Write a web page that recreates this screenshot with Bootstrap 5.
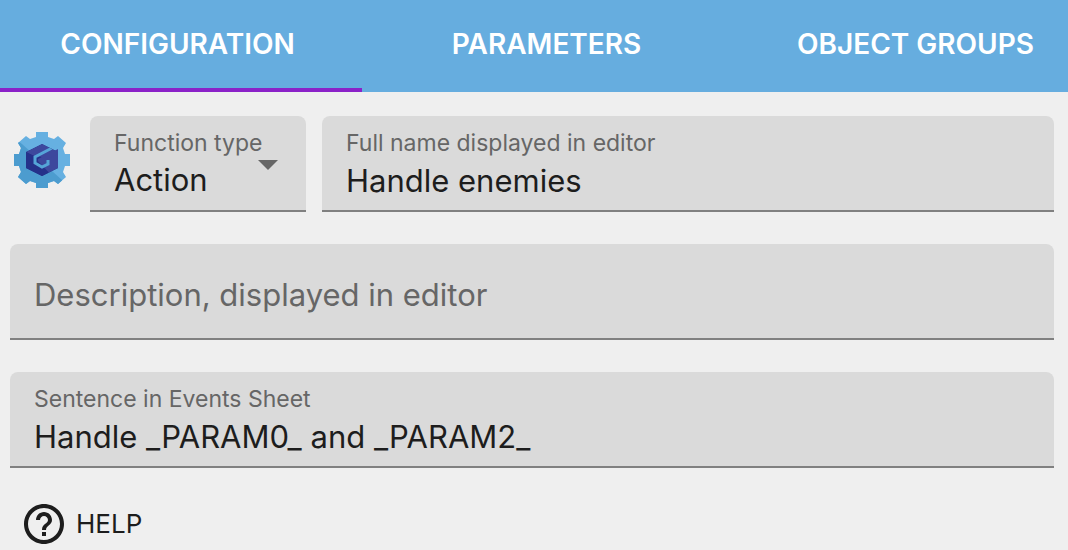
<!DOCTYPE html>
<html lang="en">
<head>
<meta charset="utf-8">
<meta name="viewport" content="width=device-width, initial-scale=1">
<title>Function configuration</title>
<link href="https://cdn.jsdelivr.net/npm/bootstrap@5.3.0/dist/css/bootstrap.min.css" rel="stylesheet">
<style>
  body { background: #efefef; color: #1d1d1d; font-family: Inter, Roboto, "Liberation Sans", sans-serif; }
  .tab-bar { background: #66addf; }
  .tab-strip { margin: 0 -32px 0 -7px; }
  .tab-strip .nav-link { color: #fff; font-size: 28px; font-weight: 600; line-height: 40px; padding: 24px 0; border-bottom: 4px solid transparent; border-radius: 0; white-space: nowrap; }
  .tab-strip .nav-link.active { border-bottom-color: #8b22c8; }
  .editor { padding: 24px 14px 4px 10px; gap: 32px; }
  .type-field { flex: 0 0 216px; }
  .fn-icon { margin: 0 20px 8px 4px; }
  .field { background: #dadada; border-bottom: 2px solid #808080; border-radius: 8px 8px 0 0; height: 96px; padding: 13px 24px 6px; }
  .field label { color: #666; font-size: 23px; line-height: 28px; white-space: nowrap; }
  .field .entry { display: block; width: 100%; padding: 0; border: 0; background: transparent; color: #1d1d1d; font-size: 31px; line-height: 40px; height: 46px; appearance: none; outline-offset: 2px; }
  .field-plain { display: grid; align-items: center; padding: 14px 24px 6px; }
  .field-plain > * { grid-area: 1 / 1; }
  .field-plain label { font-size: 31px; line-height: 40px; pointer-events: none; }
  .field-plain .entry:not(:placeholder-shown) + label { visibility: hidden; }
  .caret { right: 28px; top: 44px; }
  .help-btn { color: #1d1d1d; font-size: 26px; line-height: 40px; gap: 12px; margin: 4px 0 0 14px; padding: 0; border: 0; border-radius: 0; }
</style>
</head>
<body>
<header class="tab-bar overflow-hidden">
  <ul class="nav nav-fill nav-justified flex-nowrap tab-strip">
    <li class="nav-item"><a class="nav-link active" aria-current="page" href="#configuration">CONFIGURATION</a></li>
    <li class="nav-item"><a class="nav-link" href="#parameters">PARAMETERS</a></li>
    <li class="nav-item"><a class="nav-link" href="#groups">OBJECT GROUPS</a></li>
  </ul>
</header>
<main id="configuration" class="editor d-flex flex-column">
  <div class="d-flex align-items-center">
    <svg class="fn-icon flex-shrink-0" width="56" height="56" viewBox="0 0 56 56" aria-hidden="true">
      <defs>
        <clipPath id="gear"><path d="M22 0H34V5L40 7L44 4L52 11L49 16L51 22H56V34H51L49 40L52 45L44 52L40 49L34 51V56H22V51L16 49L12 52L4 45L7 40L5 34H0V22H5L7 16L4 11L12 4L16 7L22 5Z"/></clipPath>
        <clipPath id="hex"><path d="M28 12L44 20V36L28 44L12 36V20Z"/></clipPath>
      </defs>
      <g clip-path="url(#gear)">
        <path fill="#66b0e1" d="M0 0H56V56H0Z"/>
        <path fill="#4c9ccf" d="M0 6L8 12L48 48V56H0Z"/>
      </g>
      <g clip-path="url(#hex)">
        <path fill="#25318a" d="M12 12H44V44H12Z"/>
        <path fill="#3d489d" d="M12 20L28 12H44V44H38L24 29L28 25L20 24Z"/>
        <path fill="#25318a" d="M12 20L22 25V31L28 35L38 44H12Z"/>
        <path fill="none" stroke="#55a5d8" stroke-width="3" d="M38 16L21 25V31L28 35L34 32V28"/>
      </g>
      <path fill="#3d489d" d="M24 27L44 17V22L35 26L28 31L24 29Z"/>
    </svg>
    <div class="d-flex flex-grow-1 gap-3">
      <div class="field type-field position-relative">
        <label class="d-block" for="ftype">Function type</label>
        <select id="ftype" class="entry"><option>Action</option><option>Condition</option><option>Expression</option></select>
        <svg class="caret position-absolute pe-none" width="20" height="10" viewBox="0 0 20 10" aria-hidden="true"><path fill="#666" d="M0 0H20L10 10Z"/></svg>
      </div>
      <div class="field flex-grow-1">
        <label class="d-block" for="fname">Full name displayed in editor</label>
        <input id="fname" class="entry" type="text" value="Handle enemies">
      </div>
    </div>
  </div>
  <div class="field field-plain">
    <input id="fdesc" class="entry" type="text" placeholder=" ">
    <label for="fdesc">Description, displayed in editor</label>
  </div>
  <div class="field">
    <label class="d-block" for="fsentence">Sentence in Events Sheet</label>
    <input id="fsentence" class="entry" type="text" value="Handle _PARAM0_ and _PARAM2_">
  </div>
  <div class="d-flex">
    <button type="button" class="btn help-btn d-flex align-items-center">
      <svg width="40" height="40" viewBox="2 2 20 20" fill="currentColor" aria-hidden="true"><path d="M11 18h2v-2h-2v2zm1-16C6.480 2 2 6.480 2 12s4.480 10 10 10 10-4.480 10-10S17.520 2 12 2zm0 18c-4.410 0-8-3.590-8-8s3.590-8 8-8 8 3.590 8 8-3.590 8-8 8zm0-14c-2.210 0-4 1.790-4 4h2c0-1.100.9-2 2-2s2 .9 2 2c0 2-3 1.750-3 5h2c0-2.250 3-2.500 3-5 0-2.210-1.790-4-4-4z"/></svg>
      HELP
    </button>
  </div>
</main>
<script src="https://cdn.jsdelivr.net/npm/bootstrap@5.3.0/dist/js/bootstrap.bundle.min.js"></script>
</body>
</html>
